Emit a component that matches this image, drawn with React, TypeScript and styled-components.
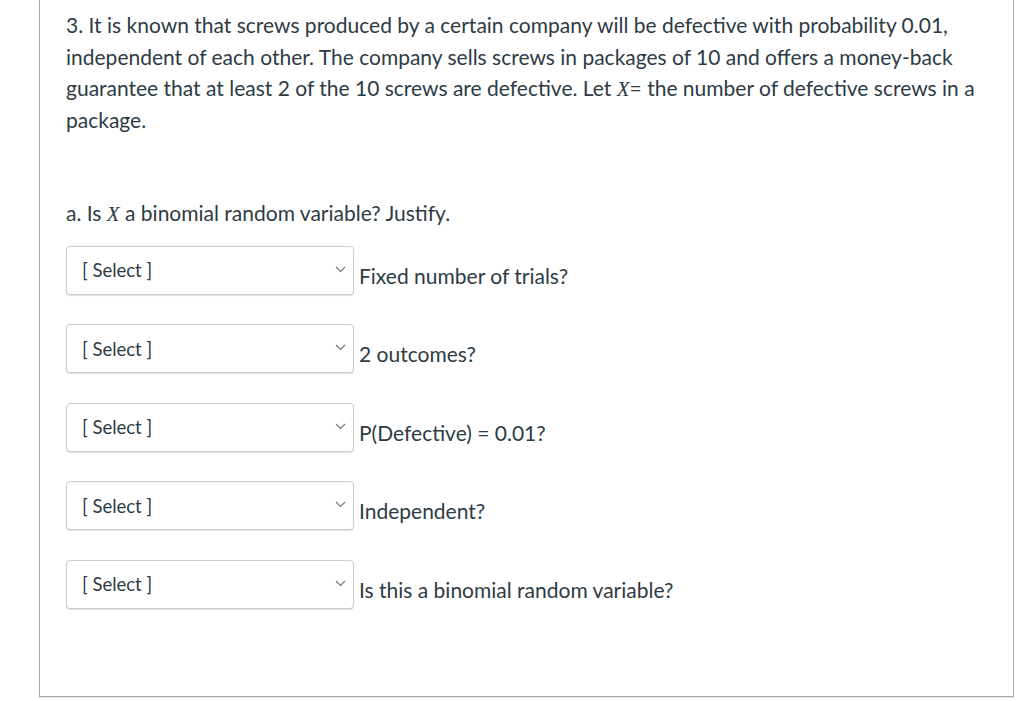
import React from "react";
import styled, { createGlobalStyle } from "styled-components";

const Global = createGlobalStyle`
  html, body { margin: 0; padding: 0; background: #ffffff; }
  body { font-family: Lato, "Open Sans", sans-serif; color: #2d3b45; }
`;

const Page = styled.div`
  padding: 0 10px 5px 39px;
`;

const Card = styled.div`
  width: 975px;
  border: 1px solid #a8a8a8;
  border-top: none;
  padding: 9px 26px 87px 26px;
  box-sizing: border-box;
  box-shadow: 0 1px 1px rgba(0,0,0,0.08);
`;

const Para = styled.p`
  margin: 0;
  font-size: 21px;
  line-height: 31.5px;
  padding-right: 10px;
`;

const SubPara = styled(Para)`
  margin-top: 62px;
  margin-bottom: 17px;
`;

const MathX = styled.span`
  font-family: "Liberation Serif", "DejaVu Serif", serif;
  font-style: italic;
  font-size: 21px;
  line-height: 1;
`;

const List = styled.div`
  display: flex;
  flex-direction: column;
  gap: 29.5px;
`;

const Row = styled.div`
  display: flex;
  align-items: flex-start;
  gap: 5px;
`;

const SelectBox = styled.div`
  width: 288px;
  height: 49px;
  box-sizing: border-box;
  border: 1px solid #c7cdd1;
  border-radius: 4px;
  box-shadow: 0 1px 1px rgba(0,0,0,0.12);
  background: #fff;
  display: flex;
  align-items: center;
  justify-content: space-between;
  padding: 0 7px 0 15px;
  font-size: 18.5px;
  color: #2d3b45;
`;

const Chevron = styled.svg`
  width: 11px;
  height: 7px;
  margin-top: -2px;
`;

const Label = styled.span`
  font-size: 21px;
  line-height: 31.5px;
  margin-top: 14px;
`;

const labels = [
  "Fixed number of trials?",
  "2 outcomes?",
  "P(Defective) = 0.01?",
  "Independent?",
  "Is this a binomial random variable?",
];

export default function App() {
  return (
    <>
      <Global />
      <Page>
        <Card>
          <Para>
            3. It is known that screws produced by a certain company will be defective with
            probability 0.01, independent of each other. The company sells screws in packages of
            10 and offers a money-back guarantee that at least 2 of the 10 screws are defective.
            Let <MathX>X</MathX>= the number of defective screws in a package.
          </Para>
          <SubPara>
            a. Is <MathX>X</MathX> a binomial random variable? Justify.
          </SubPara>
          <List>
            {labels.map((l) => (
              <Row key={l}>
                <SelectBox>
                  <span>[ Select ]</span>
                  <Chevron viewBox="0 0 11 7">
                    <path d="M1 1 L5.5 5.5 L10 1" fill="none" stroke="#6b7780" strokeWidth="1.1" />
                  </Chevron>
                </SelectBox>
                <Label>{l}</Label>
              </Row>
            ))}
          </List>
        </Card>
      </Page>
    </>
  );
}
